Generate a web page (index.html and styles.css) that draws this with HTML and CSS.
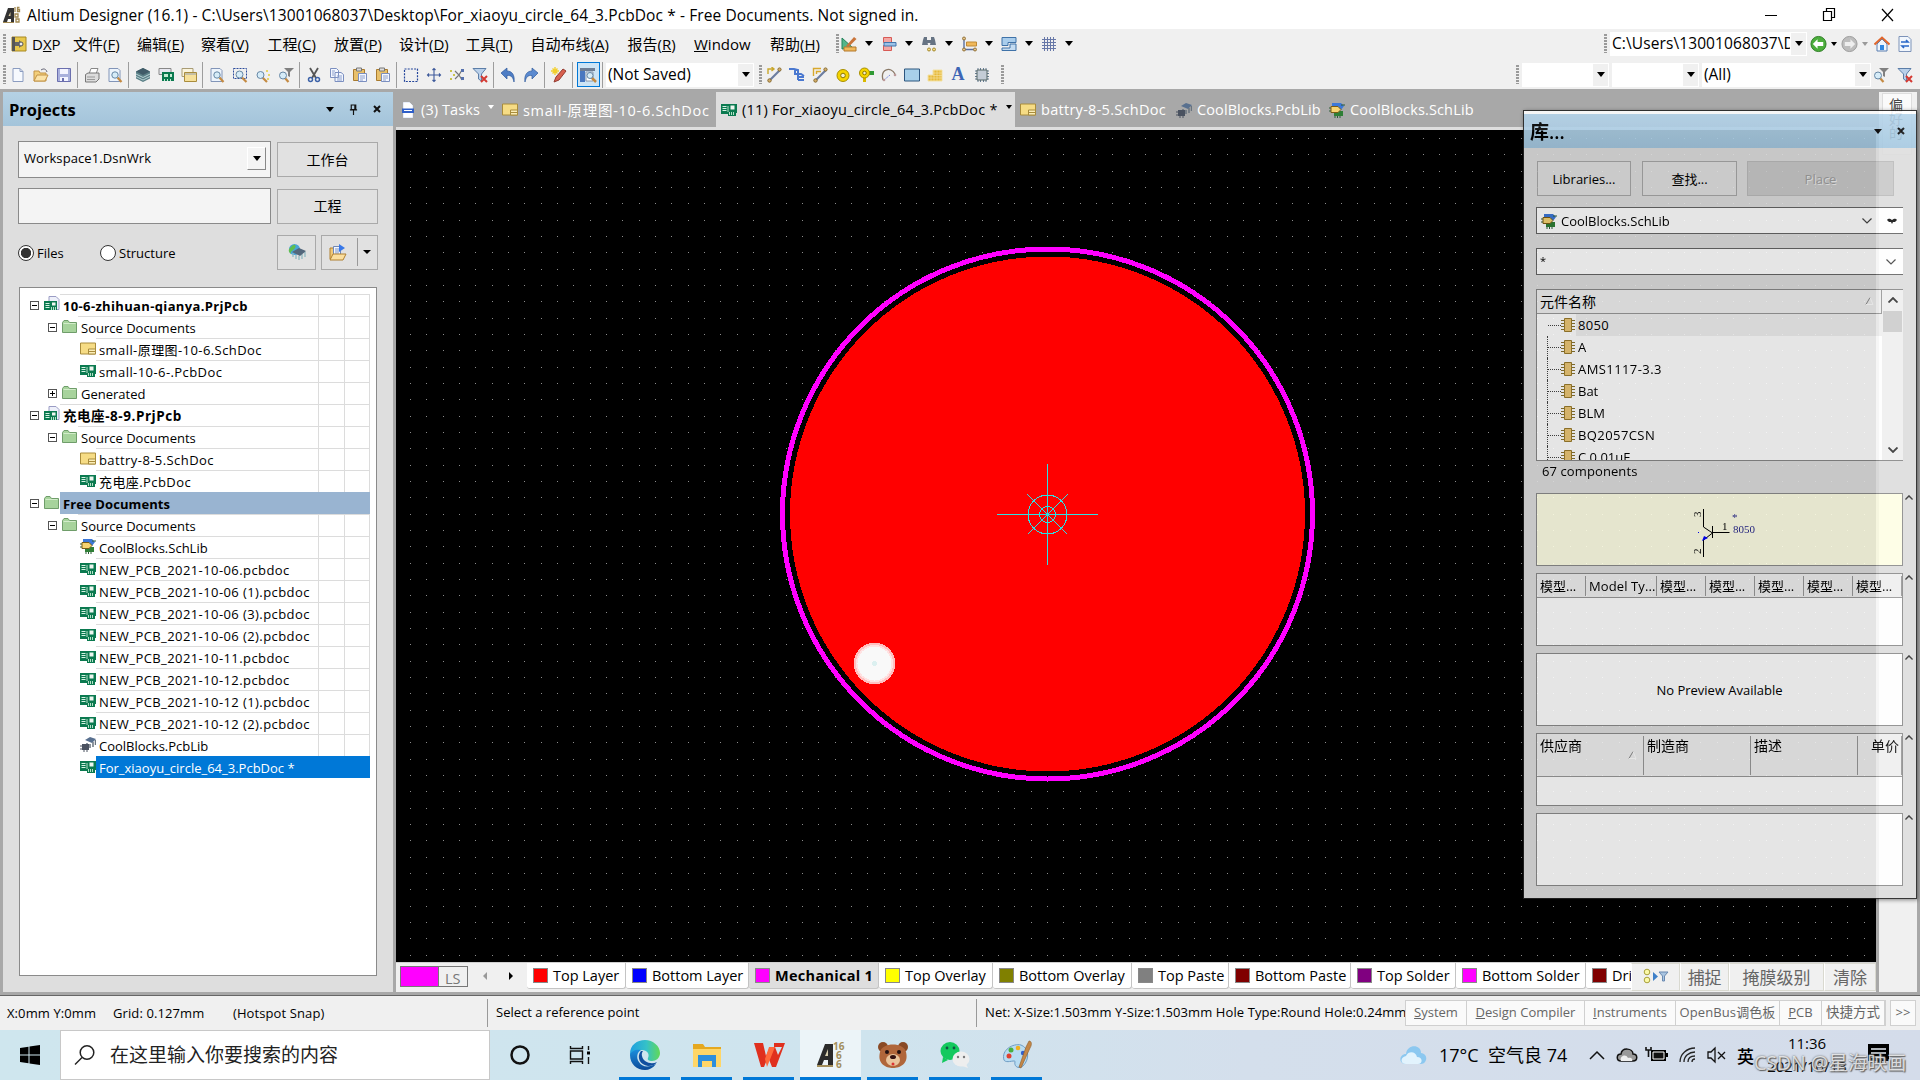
FILE: index.html
```html
<!DOCTYPE html>
<html lang="zh-CN">
<head>
    <meta charset="UTF-8">
    <title>Altium Designer (16.1)</title>
    <link rel="stylesheet" href="styles.css">
</head>
<body>
    <!-- icon sprite -->
    <svg class="sprite" width="0" height="0">
        <symbol id="i-altium" viewBox="0 0 18 18"><path d="M0 16 5 2h6v14H8v-3H5l-1 3z" fill="#333"/><path d="M7.500 6v4h-2z" fill="#d8c9a0"/><path d="M0 16h11v1H0z" fill="#a08850"/><path d="M12 1v5M16.500 1.500h-2v4h2v-2h-2M12 8h3v3h-3zM13 13h3v3h-3z" stroke="#a08850" stroke-width="1.300" fill="none"/></symbol>
        <symbol id="i-dxp" viewBox="0 0 16 16"><path d="M1 1h14v14H1z" fill="#e8c84c" stroke="#a88820"/><path d="M1 1h3v14H1z" fill="#555"/><path d="M4 6h4V4l4 4-4 4v-2H4z" fill="#666"/><circle cx="10" cy="8" r="2" fill="#eee" stroke="#555"/></symbol>
        <symbol id="i-new" viewBox="0 0 16 16"><path d="M3 1.500h7l3 3v10H3z" fill="#f6f9fe" stroke="#8b9cc0"/><path d="M10 1.500v3h3" fill="none" stroke="#8b9cc0"/></symbol>
        <symbol id="i-open" viewBox="0 0 16 16"><path d="M1 14V4h5l1 2h6v8z" fill="#f3cf7a" stroke="#c29347"/><path d="M1 14 4 8h11l-3 6z" fill="#fbe3a8" stroke="#c29347"/><path d="M8 3c3-2 5-1 6 2" fill="none" stroke="#667"/></symbol>
        <symbol id="i-save" viewBox="0 0 16 16"><path d="M1.500 1.500h13v13h-13z" fill="#a9b0dc" stroke="#6b6fae"/><path d="M4 2h8v5H4zM4 10h8v4H4z" fill="#f4f4ff"/><path d="M6 11h2v3H6z" fill="#6b6fae"/></symbol>
        <symbol id="i-print" viewBox="0 0 16 16"><path d="M5 7 7 1.500h7L12 7" fill="#fff" stroke="#888"/><path d="M1.500 7.500 4 6h11v6l-3 3H1.500z" fill="#dcdcdc" stroke="#777"/><path d="M3 10h8M3 12.500h8" stroke="#999"/></symbol>
        <symbol id="i-preview" viewBox="0 0 16 16"><path d="M2 1.500h9l2 2v11H2z" fill="#edf4fc" stroke="#8295b8"/><path d="M10.500 10.500 14.500 15" stroke="#c48a42" stroke-width="2.200"/><circle cx="8" cy="8" r="3.200" fill="#d6ecf8" stroke="#6687a5"/></symbol>
        <symbol id="i-layers" viewBox="0 0 16 16"><path d="m8 1 7 3.500v7L8 15l-7-3.500v-7z" fill="#5a7f86"/><path d="m8 1 7 3.500L8 8 1 4.500z" fill="#405b68"/><path d="m1 7 7 3.500L15 7M1 9.500 8 13l7-3.500" stroke="#b9d4d6" fill="none"/></symbol>
        <symbol id="i-pcb" viewBox="0 0 16 13"><path d="M0 1h16v9h-1v3H7v-2H0z" fill="#0b7a50"/><path d="M1.500 3.500h4M1.500 5.500h4M1.500 7.500h4" stroke="#d6f2e4"/><path d="M9.500 2.500h4v4h-4z" fill="#eef6f0"/><path d="M7 3v6M8.500 9v3M10.500 9v3M12.500 9v3" stroke="#b5e0c6"/></symbol>
        <symbol id="i-pcb2" viewBox="0 0 16 16"><path d="M1 1.500h12v6H1z" fill="#e8e8f0" stroke="#888"/><path d="M4 5h12v9H4z" fill="#0b7a50"/><path d="M6 7h4v3H6zM12 7h2v3h-2zM6 12h1v2H6zm3 0h1v2H9zm3 0h1v2h-1z" fill="#c5ecd4"/></symbol>
        <symbol id="i-sheets" viewBox="0 0 16 16"><path d="M1 1.500h11v8H1z" fill="#faf4dd" stroke="#a99c75"/><path d="M3.500 5.500h12v9h-12z" fill="#f6e09a" stroke="#a98c3c"/><path d="M4 6h11v2H4z" fill="#c5bfa5"/></symbol>
        <symbol id="i-zoomsel" viewBox="0 0 16 16"><path d="M1.500 1.500h13v10h-13z" fill="none" stroke="#2c4c9c" stroke-dasharray="2 1"/><path d="M10 10.500 14.500 15" stroke="#c48a42" stroke-width="2.200"/><circle cx="7.500" cy="7.500" r="3.500" fill="#d6ecf8" stroke="#6687a5"/></symbol>
        <symbol id="i-zoom" viewBox="0 0 16 16"><path d="M7 10 12 15" stroke="#c48a42" stroke-width="2.200"/><circle cx="5.500" cy="8" r="3.500" fill="#d6ecf8" stroke="#6687a5"/><path d="M11 3h2v2h-2zm2 4h2v2h-2zm-1 4h2v2h-2z" fill="#e6d66a"/></symbol>
        <symbol id="i-zoomf" viewBox="0 0 16 16"><path d="M6.500 10.500 10.500 15" stroke="#c48a42" stroke-width="2.200"/><circle cx="5" cy="8.500" r="3.500" fill="#d6ecf8" stroke="#6687a5"/><path d="M6 1h10l-4 4v5l-2-1V5z" fill="#808080"/></symbol>
        <symbol id="i-cut" viewBox="0 0 16 16"><path d="m4 1 6 10M12 1 6 11" stroke="#555" stroke-width="1.800"/><circle cx="4.500" cy="12.500" r="2" fill="none" stroke="#3c62a8" stroke-width="1.500"/><circle cx="11.500" cy="12.500" r="2" fill="none" stroke="#3c62a8" stroke-width="1.500"/></symbol>
        <symbol id="i-copy" viewBox="0 0 16 16"><path d="M1.500 1.500h6l2 2v7h-8zM6 5.500h6l2.500 2v7H6z" fill="#f2f6ff" stroke="#7b8fc0"/><path d="M8 9h5M8 11h5M8 13h5M3 4h3M3 6h2M3 8h2" stroke="#8da0cc"/></symbol>
        <symbol id="i-paste" viewBox="0 0 16 16"><path d="M1.500 2.500h11v11h-11z" fill="#e8c06a" stroke="#a97b2f"/><path d="M4.500 1h5v3h-5z" fill="#ddd" stroke="#777"/><path d="M6.500 6.500h8v8h-8z" fill="#f4f7ff" stroke="#7b8fc0"/><path d="M8 9h5M8 11h5M8 13h3" stroke="#8da0cc"/></symbol>
        <symbol id="i-select" viewBox="0 0 16 16"><path d="M1.500 2h13v12.500h-13z" fill="none" stroke="#22449a" stroke-width="1.200" stroke-dasharray="2 1.200"/></symbol>
        <symbol id="i-move" viewBox="0 0 16 16"><path d="M8 1.500v13M1.500 8h13M6.500 3 8 1.500 9.500 3M6.500 13 8 14.500 9.500 13M3 6.500 1.500 8 3 9.500M13 6.500 14.500 8 13 9.500" fill="none" stroke="#3e5a9b" stroke-width="1.100"/></symbol>
        <symbol id="i-desel" viewBox="0 0 16 16"><path d="m6 4 4 4-4 4M13 3l-3 5 3 5" fill="none" stroke="#777" stroke-width="1.200"/><path d="M1 3h2v2H1zm0 8h2v2H1zm3-4h2v2H4z" fill="#c9c34a"/><path d="M12 2h3v3h-3zm0 8h3v3h-3z" fill="#5571ad"/></symbol>
        <symbol id="i-clrf" viewBox="0 0 16 16"><path d="M1 1.500h13L9.500 7v7l-3-2V7z" fill="#b9d0ea" stroke="#5c7ea8"/><path d="m9 9 6 6m0-6-6 6" stroke="#d43a33" stroke-width="2"/></symbol>
        <symbol id="i-undo" viewBox="0 0 16 16"><path d="M1 6 7 1v3c5 0 8 4 7 11-1-5-3-7-7-6.500V12z" fill="#4e7dc4" stroke="#2f5a9c" stroke-width=".7"/></symbol>
        <symbol id="i-redo" viewBox="0 0 16 16"><path d="M15 6 9 1v3C4 4 1 8 2 15c1-5 3-7 7-6.500V12z" fill="#5b8ad0" stroke="#2f5a9c" stroke-width=".7"/></symbol>
        <symbol id="i-pen" viewBox="0 0 16 16"><path d="m3 15 2-5 7-8 3 2-7 9z" fill="#d9604f" stroke="#943b30"/><path d="M4 0v8M0 4h8M1.500 1.500l5 5M6.500 1.500l-5 5" stroke="#f2cf2c" stroke-width="1.400"/></symbol>
        <symbol id="i-browse" viewBox="0 0 18 16"><path d="M1 1h15v3H1z" fill="#6d7d94"/><path d="M1 4h5v11H1z" fill="#4a78c0"/><path d="M7 5h7v9H7z" fill="#fff" stroke="#8a97ab"/><path d="m12 10 5 5" stroke="#c48a42" stroke-width="2.500"/><circle cx="11" cy="8.500" r="3" fill="#d6ecf8" stroke="#6687a5"/></symbol>
        <symbol id="i-route" viewBox="0 0 16 16"><path d="M2 7V2h5M5.500 0 8 2 5.500 4" fill="none" stroke="#c9a72c" stroke-width="1.400"/><path d="M4 13 14 3" stroke="#6b7da0" stroke-width="2.200"/><circle cx="3.500" cy="13.500" r="1.700" fill="#d5b06c" stroke="#876a2f"/><circle cx="13.500" cy="2.500" r="1.600" fill="#d5b06c" stroke="#876a2f"/></symbol>
        <symbol id="i-diff" viewBox="0 0 16 16"><path d="M0 2h5l4 1v10M6 2v5h6l3 2M9 10h6M9 13h6" fill="none" stroke="#4a78d0" stroke-width="2"/></symbol>
        <symbol id="i-multi" viewBox="0 0 16 16"><path d="M1.500 9V1.500H9M4.500 7V4.500H9" fill="none" stroke="#d8a82c" stroke-width="1.400"/><path d="M4 13 14 3" stroke="#6b7da0" stroke-width="2.200"/><circle cx="3.500" cy="13.500" r="1.700" fill="#d5b06c" stroke="#876a2f"/><circle cx="13.500" cy="2.500" r="1.600" fill="#d5b06c" stroke="#876a2f"/></symbol>
        <symbol id="i-pad" viewBox="0 0 16 16"><circle cx="8" cy="8.500" r="6" fill="#f5d400" stroke="#a88f00"/><circle cx="8" cy="8.500" r="2.300" fill="#f4f0d0" stroke="#8c7700"/></symbol>
        <symbol id="i-via" viewBox="0 0 16 16"><path d="M5 10h3v5H5z" fill="#d9b800"/><path d="M10 4h6v4h-6z" fill="#2f9a34"/><circle cx="6.500" cy="6" r="5" fill="#f5d400" stroke="#a88f00"/><circle cx="6.500" cy="6" r="1.800" fill="#f4f0d0" stroke="#8c7700"/></symbol>
        <symbol id="i-arc" viewBox="0 0 16 16"><path d="M2 13C-1 2 10-1 14 7" fill="none" stroke="#8a7a68" stroke-width="1.300"/><path d="m3 13 6-5" stroke="#7b8ce0" stroke-dasharray="2 1"/><circle cx="3" cy="13" r="1.300" fill="#b99"/><circle cx="14" cy="8" r="1.300" fill="#b99"/></symbol>
        <symbol id="i-fill" viewBox="0 0 16 16"><path d="M.5 2h15v12H.5z" fill="#a8d0ea" stroke="#2d567f"/></symbol>
        <symbol id="i-poly" viewBox="0 0 16 16"><path d="M1 14V8h5V3h9v11z" fill="#e6b93a" stroke="#f3e2a6"/><path d="M1 11h14M4 8v6M7 3v11M10 3v11M13 3v11M6 6h9M6 8.500h9" stroke="#f6e3a4" stroke-width=".6"/></symbol>
        <symbol id="i-chip" viewBox="0 0 16 16"><path d="M1 4h14M1 6.500h14M1 9.500h14M1 12h14M4 1v14M6.500 1v14M9.500 1v14M12 1v14" stroke="#667c93"/><path d="M3 3h10v10H3z" fill="#c3ccd6" stroke="#566"/></symbol>
        <symbol id="i-draft" viewBox="0 0 16 16"><path d="M1 2v11l11-1z" fill="#53b58a" stroke="#23835a"/><path d="M3 11h12v4H3z" fill="#f0b85a" stroke="#b3792a"/><path d="m5 10 8-9 2.500 2-8 8z" fill="#c9743a"/></symbol>
        <symbol id="i-align" viewBox="0 0 16 16"><path d="M2.500 1.500h8v5h-8zM2.500 9.500h8v5h-8z" fill="#f3a7a4" stroke="#d85a55"/><path d="M3 6.500h12v3.500H3z" fill="#9cc2e8" stroke="#4376ad"/></symbol>
        <symbol id="i-find" viewBox="0 0 16 16"><path d="M3 1h3v3l1 5H1l1-5zM10 1h3l1 3 1 5H9l1-5zM6 4h4v3H6z" fill="#667383"/><circle cx="8" cy="13.500" r="1.500" fill="#f4dc8c" stroke="#a58a2c"/><circle cx="13" cy="13.500" r="1.500" fill="#f4dc8c" stroke="#a58a2c"/></symbol>
        <symbol id="i-dim" viewBox="0 0 16 16"><path d="M3 2v11.500h11" fill="none" stroke="#5b6f9f" stroke-width="1.400"/><path d="M5.500 6h10v4h-10z" fill="#f0b85a" stroke="#c08a35"/><circle cx="3" cy="2.500" r="1.500" fill="#e5c58a" stroke="#94733a"/><circle cx="3" cy="13.500" r="1.500" fill="#e5c58a" stroke="#94733a"/><circle cx="14" cy="13.500" r="1.500" fill="#e5c58a" stroke="#94733a"/></symbol>
        <symbol id="i-room" viewBox="0 0 16 16"><path d="M1 1.500h14v5H7v3H1z" fill="#a9cdec" stroke="#3f72a8"/><path d="M9 8h6v6.500H1V12h8z" fill="#c4dcf2" stroke="#3f72a8"/></symbol>
        <symbol id="i-grid" viewBox="0 0 16 16"><path d="M1 3.500h14M1 6.500h14M1 9.500h14M1 12.500h14M3.500 1v14M6.500 1v14M9.500 1v14M12.500 1v14" stroke="#6878a8"/></symbol>
        <symbol id="i-back" viewBox="0 0 18 18"><circle cx="9" cy="9" r="8" fill="#4cae3c" stroke="#2a7a22"/><path d="m8 4-5 5 5 5v-3h6V7H8z" fill="#fff"/></symbol>
        <symbol id="i-fwd" viewBox="0 0 18 18"><circle cx="9" cy="9" r="8" fill="#bdbdbd" stroke="#999"/><path d="m10 4 5 5-5 5v-3H4V7h6z" fill="#eee"/></symbol>
        <symbol id="i-home" viewBox="0 0 16 16"><path d="M3 8v7h10V8L8 3z" fill="#eef4fb" stroke="#5a7fb0"/><path d="M.5 8.500 8 1.500l7.500 7" fill="none" stroke="#e0662c" stroke-width="2"/><path d="M6 9h4v5H6z" fill="#2f86e0"/></symbol>
        <symbol id="i-sync" viewBox="0 0 16 16"><path d="M2 .5h9l3 3v12H2z" fill="#f2f7fd" stroke="#7d93b8"/><path d="M4 6h7L9 4M12 10H5l2 2" fill="none" stroke="#2a68c8" stroke-width="1.600"/></symbol>
        <symbol id="i-sch" viewBox="0 0 16 13"><path d="M.5 1h15v11H.5z" fill="#f6dc85" stroke="#a98c3c"/><path d="M8.500 7h7v5h-7zM9 9.500h6" fill="#fbeeb8" stroke="#a98c3c"/></symbol>
        <symbol id="i-tasks" viewBox="0 0 16 16"><path d="M3.500.5h6l3 3v12h-9z" fill="#fff" stroke="#e8eefa"/><path d="M2 6.500h12v4.500H2z" fill="#2f5fc8"/><path d="M4 8.500h8" stroke="#fff"/></symbol>
        <symbol id="i-schlib" viewBox="0 0 16 16"><path d="M3 1h9l3 3-3 4H3z" fill="#3c78d8"/><path d="M5 9h9v5H5z" fill="#2f7f36"/><path d="M6 14v2M8.500 14v2M11 14v2M0 6h3M0 9h3M12 3h4" stroke="#2d5c38"/><path d="M2 4.500h7l3 3-3 3H2z" fill="#f7d472" stroke="#7a5c14"/></symbol>
        <symbol id="i-pcblib" viewBox="0 0 16 16"><path d="m5 4 5-3 6 2-4 4z" fill="#58708f"/><path d="M7 7v4M10 8v4M13 6v5M15.500 4v5" stroke="#68737e" stroke-width="1.500"/><path d="M2 8h7v6H2z" fill="#4a5260"/><path d="M0 10h2M0 13h2M4 14v2M7 14v2" stroke="#4a5260"/></symbol>
        <symbol id="i-prj" viewBox="0 0 16 16"><path d="M5 .5h7l3 3v10H5z" fill="#eef0fa" stroke="#9a9cc4"/><path d="M0 5h13v9H0z" fill="#0b7a50"/><path d="M1.500 7.500h4M1.500 9.500h4M1.500 11.500h4" stroke="#d6f2e4"/><path d="M8 6.500h3.500v3H8z" fill="#eef6f0"/><path d="M7.500 11v3M9.500 11v3M11.500 11v3" stroke="#b5e0c6"/></symbol>
        <symbol id="i-folder" viewBox="0 0 15 13"><path d="M.5 12.500v-10L2 .5h4l1.500 2h7v10z" fill="#a7d39c" stroke="#6f9d6a"/><path d="M1.500 3.500h12" stroke="#d2ecca"/></symbol>
        <symbol id="i-part" viewBox="0 0 14 14"><path d="M0 2.500h14M0 5.500h14M0 8.500h14M0 11.500h14" stroke="#8a7430"/><path d="M3.500.5h7v13h-7z" fill="#ecc877" stroke="#9b7c2d"/></symbol>
        <symbol id="i-globe" viewBox="0 0 18 18"><circle cx="6.500" cy="6.500" r="5.500" fill="#49a4d8"/><path d="M3 4c3-4 6-2 4 1s-5 3-4 6c-3-2-3-5 0-7z" fill="#5fbf4f"/><path d="M5 10v4M8 12v4M11 13v4M14 11v5M17 9v5" stroke="#8fb8c0" stroke-width="1.300"/><path d="m4 9 7-4 7 3-6 5z" fill="#53677c"/></symbol>
        <symbol id="i-openprj" viewBox="0 0 18 18"><path d="M1 16V5h4v8z" fill="#f0c878" stroke="#b08030"/><path d="M4.500 3.500h7v10h-7z" fill="#f4f8ff" stroke="#6f88b8"/><path d="M6 6h4M6 8h4M6 10h4" stroke="#7c94c4"/><path d="M10 1v8l6-4z" fill="#3878e8"/><path d="m1 17 3-6h13l-3 6z" fill="#fbdf9f" stroke="#b08030"/></symbol>
        <symbol id="i-mask" viewBox="0 0 26 16"><circle cx="4" cy="4" r="2.800" fill="#fbf9a8" stroke="#a9a13c"/><circle cx="4" cy="12" r="2.800" fill="#fbf9a8" stroke="#a9a13c"/><path d="M10 4v9l5-4.500z" fill="#3f80c8"/><path d="M16 4h9l-3.500 4v5h-2V8z" fill="#a8c4e0" stroke="#6888b0"/></symbol>
        <symbol id="i-pin" viewBox="0 0 10 12"><path d="M2.500 1h5v5h-5zM1 6.500h8M5 6v6M6.500 1v5" fill="none" stroke="#111" stroke-width="1.300"/></symbol>
        <symbol id="i-x" viewBox="0 0 8 8"><path d="m1 1 6 6m0-6L1 7" stroke="#111" stroke-width="2"/></symbol>
        <symbol id="i-chev" viewBox="0 0 10 6"><path d="m.5.500 4.500 4.500L9.500.5" fill="none" stroke="#444" stroke-width="1.200"/></symbol>
        <symbol id="i-up" viewBox="0 0 10 6"><path d="M.5 5.500 5 1l4.500 4.500" fill="none" stroke="#333" stroke-width="1.800"/></symbol>
    </svg>

    <div class="titlebar">
        <svg class="app-icon"><use href="#i-altium"/></svg>
        <span class="title-text">Altium Designer (16.1) - C:\Users\13001068037\Desktop\For_xiaoyu_circle_64_3.PcbDoc * - Free Documents. Not signed in.</span>
        <svg class="win-btns" width="140" height="16"><path d="M5 8.500h12" stroke="#000"/><path d="M63.500 4.500h8v9h-8zM66.500 4.500v-3h8v9h-3" fill="none" stroke="#000" stroke-width="1.200"/><path d="m122 2 11 12m0-12-11 12" stroke="#000" stroke-width="1.200"/></svg>
    </div>

    <div class="menubar">
        <i class="grip"></i>
        <svg class="icon dxp"><use href="#i-dxp"/></svg>
        <span class="menu m-dxp">D<u>X</u>P</span>
        <span class="menu m1">文件(<u>F</u>)</span>
        <span class="menu m2">编辑(<u>E</u>)</span>
        <span class="menu m3">察看(<u>V</u>)</span>
        <span class="menu m3">工程(<u>C</u>)</span>
        <span class="menu m4">放置(<u>P</u>)</span>
        <span class="menu m3">设计(<u>D</u>)</span>
        <span class="menu m4">工具(<u>T</u>)</span>
        <span class="menu m5">自动布线(<u>A</u>)</span>
        <span class="menu m3">报告(<u>R</u>)</span>
        <span class="menu m6"><u>W</u>indow</span>
        <span class="menu m7">帮助(<u>H</u>)</span>
        <i class="grip"></i>
        <div class="drops">
            <span><svg class="icon"><use href="#i-draft"/></svg><i class="tri"></i></span>
            <span><svg class="icon"><use href="#i-align"/></svg><i class="tri"></i></span>
            <span><svg class="icon"><use href="#i-find"/></svg><i class="tri"></i></span>
            <span><svg class="icon"><use href="#i-dim"/></svg><i class="tri"></i></span>
            <span><svg class="icon"><use href="#i-room"/></svg><i class="tri"></i></span>
            <span><svg class="icon"><use href="#i-grid"/></svg><i class="tri"></i></span>
        </div>
        <div class="bar-right">
            <i class="grip"></i>
            <div class="combo address"><span>C:\Users\13001068037\Desktop</span><b><i class="tri"></i></b></div>
            <svg class="icon nav"><use href="#i-back"/></svg><i class="tri small"></i>
            <svg class="icon nav"><use href="#i-fwd"/></svg><i class="tri small grey"></i>
            <svg class="icon home"><use href="#i-home"/></svg>
            <svg class="icon"><use href="#i-sync"/></svg>
        </div>
    </div>

    <div class="toolbar">
        <i class="grip"></i>
        <div class="tools">
            <svg><use href="#i-new"/></svg><svg><use href="#i-open"/></svg><svg><use href="#i-save"/></svg><i class="sep"></i>
            <svg><use href="#i-print"/></svg><svg><use href="#i-preview"/></svg><i class="sep"></i>
            <svg><use href="#i-layers"/></svg><svg><use href="#i-pcb2"/></svg><svg><use href="#i-sheets"/></svg><i class="sep"></i>
            <svg><use href="#i-preview"/></svg><svg><use href="#i-zoomsel"/></svg><svg><use href="#i-zoom"/></svg><svg><use href="#i-zoomf"/></svg><i class="sep"></i>
            <svg><use href="#i-cut"/></svg><svg><use href="#i-copy"/></svg><svg><use href="#i-paste"/></svg><svg><use href="#i-paste"/></svg><i class="sep"></i>
            <svg><use href="#i-select"/></svg><svg><use href="#i-move"/></svg><svg><use href="#i-desel"/></svg><svg><use href="#i-clrf"/></svg><i class="sep"></i>
            <svg><use href="#i-undo"/></svg><svg><use href="#i-redo"/></svg><i class="sep"></i>
            <svg><use href="#i-pen"/></svg><i class="sep"></i>
            <span class="tool-on"><svg><use href="#i-browse"/></svg></span><i class="sep"></i>
        </div>
        <div class="combo saved"><span>(Not Saved)</span><b><i class="tri"></i></b></div>
        <i class="grip g2"></i>
        <div class="tools place">
            <svg><use href="#i-route"/></svg><svg><use href="#i-diff"/></svg><svg><use href="#i-multi"/></svg><svg><use href="#i-pad"/></svg><svg><use href="#i-via"/></svg><svg><use href="#i-arc"/></svg><svg><use href="#i-fill"/></svg><svg><use href="#i-poly"/></svg><span class="letter-a">A</span><svg><use href="#i-chip"/></svg>
        </div>
        <i class="grip"></i>
        <div class="bar-right">
            <i class="grip"></i>
            <div class="combo f1"><span></span><b><i class="tri"></i></b></div>
            <div class="combo f1"><span></span><b><i class="tri"></i></b></div>
            <div class="combo f2"><span>(All)</span><b><i class="tri"></i></b></div>
            <svg class="icon zf"><use href="#i-zoomf"/></svg>
            <svg class="icon"><use href="#i-clrf"/></svg>
        </div>
    </div>

    <div class="workspace">
        <div class="panel">
            <div class="panel-head">
                <span>Projects</span>
                <div class="head-icons"><i class="tri"></i><svg class="pin"><use href="#i-pin"/></svg><svg class="close"><use href="#i-x"/></svg></div>
            </div>
            <div class="panel-body">
                <div class="form-row">
                    <div class="select">Workspace1.DsnWrk<b><i class="tri"></i></b></div>
                    <div class="button">工作台</div>
                </div>
                <div class="form-row second">
                    <div class="select"></div>
                    <div class="button">工程</div>
                </div>
                <div class="form-row radios">
                    <i class="radio on"></i><span class="r-files">Files</span>
                    <i class="radio"></i><span class="r-struct">Structure</span>
                    <div class="button sq"><svg><use href="#i-globe"/></svg></div>
                    <div class="button split"><svg><use href="#i-openprj"/></svg><i class="bar"></i><i class="tri small"></i></div>
                </div>
                <div class="tree">
                    <div class="node l0"><i class="exp"></i><svg class="prj"><use href="#i-prj"/></svg><div class="cell"><b>10-6-zhihuan-qianya.PrjPcb</b></div></div>
                    <div class="node l1"><i class="exp"></i><svg class="fold"><use href="#i-folder"/></svg><div class="cell">Source Documents</div></div>
                    <div class="node l2"><svg><use href="#i-sch"/></svg><div class="cell wide">small-原理图-10-6.SchDoc</div></div>
                    <div class="node l2"><svg><use href="#i-pcb"/></svg><div class="cell wide">small-10-6-.PcbDoc</div></div>
                    <div class="node l1"><i class="exp plus"></i><svg class="fold"><use href="#i-folder"/></svg><div class="cell">Generated</div></div>
                    <div class="node l0"><i class="exp"></i><svg class="prj"><use href="#i-prj"/></svg><div class="cell"><b class="cjk">充电座-8-9.PrjPcb</b></div></div>
                    <div class="node l1"><i class="exp"></i><svg class="fold"><use href="#i-folder"/></svg><div class="cell">Source Documents</div></div>
                    <div class="node l2"><svg><use href="#i-sch"/></svg><div class="cell wide">battry-8-5.SchDoc</div></div>
                    <div class="node l2"><svg><use href="#i-pcb"/></svg><div class="cell wide">充电座.PcbDoc</div></div>
                    <div class="node l0 group"><i class="exp"></i><svg class="fold"><use href="#i-folder"/></svg><div class="cell"><b class="plain">Free Documents</b></div></div>
                    <div class="node l1"><i class="exp"></i><svg class="fold"><use href="#i-folder"/></svg><div class="cell">Source Documents</div></div>
                    <div class="node l2"><svg class="lib"><use href="#i-schlib"/></svg><div class="cell">CoolBlocks.SchLib</div></div>
                    <div class="node l2"><svg><use href="#i-pcb"/></svg><div class="cell wide">NEW_PCB_2021-10-06.pcbdoc</div></div>
                    <div class="node l2"><svg><use href="#i-pcb"/></svg><div class="cell wide">NEW_PCB_2021-10-06 (1).pcbdoc</div></div>
                    <div class="node l2"><svg><use href="#i-pcb"/></svg><div class="cell wide">NEW_PCB_2021-10-06 (3).pcbdoc</div></div>
                    <div class="node l2"><svg><use href="#i-pcb"/></svg><div class="cell wide">NEW_PCB_2021-10-06 (2).pcbdoc</div></div>
                    <div class="node l2"><svg><use href="#i-pcb"/></svg><div class="cell wide">NEW_PCB_2021-10-11.pcbdoc</div></div>
                    <div class="node l2"><svg><use href="#i-pcb"/></svg><div class="cell wide">NEW_PCB_2021-10-12.pcbdoc</div></div>
                    <div class="node l2"><svg><use href="#i-pcb"/></svg><div class="cell wide">NEW_PCB_2021-10-12 (1).pcbdoc</div></div>
                    <div class="node l2"><svg><use href="#i-pcb"/></svg><div class="cell wide">NEW_PCB_2021-10-12 (2).pcbdoc</div></div>
                    <div class="node l2"><svg class="lib"><use href="#i-pcblib"/></svg><div class="cell">CoolBlocks.PcbLib</div></div>
                    <div class="node l2 selected"><svg><use href="#i-pcb"/></svg><div class="cell">For_xiaoyu_circle_64_3.PcbDoc *</div></div>
                </div>
            </div>
        </div>

        <div class="editor">
            <div class="tabs">
                <div class="tab t1"><svg class="sq"><use href="#i-tasks"/></svg><span>(3) Tasks</span><i class="tri small"></i></div>
                <div class="tab t2"><svg><use href="#i-sch"/></svg><span>small-原理图-10-6.SchDoc</span></div>
                <div class="tab t3 active"><svg><use href="#i-pcb"/></svg><span>(11) For_xiaoyu_circle_64_3.PcbDoc *</span><i class="tri small"></i></div>
                <div class="tab t4"><svg><use href="#i-sch"/></svg><span>battry-8-5.SchDoc</span></div>
                <div class="tab t5"><svg class="sq"><use href="#i-pcblib"/></svg><span>CoolBlocks.PcbLib</span></div>
                <div class="tab t6"><svg class="sq"><use href="#i-schlib"/></svg><span>CoolBlocks.SchLib</span></div>
            </div>
            <svg class="board" width="1480" height="832" viewBox="396 130 1480 832">
                <defs>
                    <pattern id="dots" x="410" y="122" width="49" height="49" patternUnits="userSpaceOnUse">
                        <path d="M0 0h1v1H0zM16 0h1v1h-1zM33 0h1v1h-1zM0 16h1v1H0zM16 16h1v1h-1zM33 16h1v1h-1zM0 32h1v1H0zM16 32h1v1h-1zM33 32h1v1h-1z" fill="#8c8c8c"/>
                    </pattern>
                </defs>
                <rect x="396" y="130" width="1480" height="832" fill="#000"/>
                <rect x="396" y="130" width="1480" height="832" fill="url(#dots)"/>
                <circle cx="1047.500" cy="514" r="265" fill="#000" stroke="#f0f" stroke-width="5" shape-rendering="crispEdges"/>
                <circle cx="1047.500" cy="514" r="257.500" fill="#f00" shape-rendering="crispEdges"/>
                <g fill="none" stroke="#2ee0e4" shape-rendering="crispEdges">
                    <path d="M997 514.500h101M1047.500 464v101M1027.500 494.500l40 40M1067.500 494.500l-40 40"/>
                    <circle cx="1047.500" cy="514.500" r="19.500"/>
                    <circle cx="1047.500" cy="514.500" r="8"/>
                </g>
                <circle cx="874.500" cy="663.500" r="20.800" fill="#ffc0c0" shape-rendering="crispEdges"/>
                <circle cx="874.500" cy="663.500" r="18.600" fill="#ffe2e2" shape-rendering="crispEdges"/>
                <circle cx="874.500" cy="663.500" r="17" fill="#f9f9f9" shape-rendering="crispEdges"/>
                <circle cx="874.500" cy="663.500" r="2.600" fill="#dcf0f0" shape-rendering="crispEdges"/>
            </svg>
            <div class="layerbar">
                <div class="ls"><i></i><span>LS</span></div>
                <i class="arrow left"></i><i class="arrow right"></i>
                <div class="layers">
                    <div class="layer w1"><i class="red"></i><span>Top Layer</span></div>
                    <div class="layer w2"><i class="blue"></i><span>Bottom Layer</span></div>
                    <div class="layer w3 current"><i class="magenta"></i><span>Mechanical 1</span></div>
                    <div class="layer w4"><i class="yellow"></i><span>Top Overlay</span></div>
                    <div class="layer w5"><i class="olive"></i><span>Bottom Overlay</span></div>
                    <div class="layer w6"><i class="gray"></i><span>Top Paste</span></div>
                    <div class="layer w7"><i class="maroon"></i><span>Bottom Paste</span></div>
                    <div class="layer w8"><i class="purple"></i><span>Top Solder</span></div>
                    <div class="layer w9"><i class="magenta"></i><span>Bottom Solder</span></div>
                    <div class="layer w10"><i class="maroon"></i><span>Drill Guide</span></div>
                </div>
                <div class="lbtn b0"><svg><use href="#i-mask"/></svg></div>
                <div class="lbtn b1">捕捉</div>
                <div class="lbtn b2">掩膜级别</div>
                <div class="lbtn b3">清除</div>
            </div>
        </div>
        <div class="sidestrip"><div class="sidetab">偏好的</div></div>
    </div>

    <div class="statusbar">
        <span class="s1">X:0mm Y:0mm</span><span class="s2">Grid: 0.127mm</span><span class="s3">(Hotspot Snap)</span>
        <span class="s4">Select a reference point</span>
        <span class="s5">Net: X-Size:1.503mm Y-Size:1.503mm Hole Type:Round Hole:0.24mm</span>
        <div class="sysbtns">
            <span class="y1"><u>S</u>ystem</span><span class="y2"><u>D</u>esign Compiler</span><span class="y3"><u>I</u>nstruments</span><span class="y4">OpenBus调色板</span><span class="y5"><u>P</u>CB</span><span class="y6">快捷方式</span>
        </div>
        <span class="more">&gt;&gt;</span>
    </div>

    <div class="taskbar">
        <div class="start"><svg width="20" height="20"><path d="M0 3 8.500 1.800v7.700H0zM9.500 1.600 20 0v9.500H9.500zM0 10.500h8.500v7.700L0 17zM9.500 10.500H20V20L9.500 18.400z"/></svg></div>
        <div class="search"><svg width="22" height="22"><circle cx="13" cy="8.500" r="6.800" fill="none" stroke="#222" stroke-width="1.500"/><path d="M8 13.500 1 20.500" stroke="#222" stroke-width="1.500"/></svg><span>在这里输入你要搜索的内容</span></div>
        <div class="apps">
            <span class="app a0"><svg width="22" height="22"><circle cx="11" cy="11" r="8.500" fill="none" stroke="#111" stroke-width="2.500"/></svg></span>
            <span class="app a0"><svg width="22" height="22"><path d="M1.500 2v2.500h12V2M1.500 20v-2.500h12V20M1.500 7h12v8h-12zM19.500 2v4M19.500 13v7" fill="none" stroke="#111" stroke-width="1.400"/><path d="M18 7.500h3v3h-3z"/></svg></span>
            <span class="app run"><svg width="32" height="32"><defs><linearGradient id="eg" x1="0" x2="1"><stop offset="0" stop-color="#1f9fe0"/><stop offset=".55" stop-color="#35c1c8"/><stop offset="1" stop-color="#62d957"/></linearGradient><linearGradient id="eb" x1="0" y1="0" x2="0" y2="1"><stop offset="0" stop-color="#1b8ddc"/><stop offset="1" stop-color="#0c4a98"/></linearGradient></defs><path d="M1 15C1 6 8 1 16 1s15 6 15 13c0 5-4 8-8 8-3 0-5-1-4-3 2-4-1-8-6-8C7 11 2 14 1 17z" fill="url(#eg)"/><path d="M1 16c1-4 6-6 11-5-4 2-5 8-2 12 3 5 9 6 17 2-3 4-7 6-11 6C8 31 1 25 1 16z" fill="url(#eb)"/><path d="M12 12c-5 6-1 14 7 15 4 0 7-1 9-4-6 3-14 0-15-6-.5-2 0-4 1-5z" fill="#114f9f"/></svg></span>
            <span class="app run"><svg width="30" height="26"><path d="M1 2h10l2 3h16v20H1z" fill="#e5a820"/><path d="M1 7h28v18H1z" fill="#ffd667"/><path d="M6 25V13h18v12h-4v-6h-10v6z" fill="#2e8fdc"/></svg></span>
            <span class="app run"><svg width="32" height="26"><path d="M1 1h9l3 13 4-9h5l3 8 4-8h-8V1h11l-9 24h-4l-4-10-4 10H8z" fill="#e0301e"/><path d="M12 17 16 5h6l-6 15-2 5z" fill="#ff6a3c"/></svg></span>
            <span class="app run cur"><svg width="30" height="28"><path d="M1 24 9 3h8v21h-5v-5H8l-2 5z" fill="#2b2b2b"/><path d="M12 8v7H9z" fill="#d8d0b0"/><path d="M1 24h16v2H1z" fill="#a38f5c"/><text x="17" y="9" class="mini">16</text><text x="20" y="18" class="mini">6</text><text x="20" y="27" class="mini">6</text></svg></span>
            <span class="app run"><svg width="32" height="28"><circle cx="6" cy="6" r="5" fill="#8a4a25"/><circle cx="26" cy="6" r="5" fill="#8a4a25"/><path d="M3 11C5 1 27 1 29 11c3 12-6 16-13 16S0 23 3 11z" fill="#b0663a"/><ellipse cx="16" cy="19" rx="7" ry="6" fill="#e9c49c"/><ellipse cx="16" cy="16" rx="3" ry="2" fill="#311"/><circle cx="10" cy="11" r="2" fill="#211"/><circle cx="22" cy="11" r="2" fill="#211"/><circle cx="16" cy="23" r="1.500" fill="#d33"/></svg></span>
            <span class="app run"><svg width="32" height="28"><ellipse cx="11" cy="10" rx="9.500" ry="9" fill="#14c95e"/><path d="m4 16-1 6 6-3z" fill="#14c95e"/><circle cx="8" cy="7" r="1.400" fill="#154"/><circle cx="15" cy="7" r="1.400" fill="#154"/><ellipse cx="22" cy="18" rx="8.500" ry="7.500" fill="#eee"/><path d="m27 23 2 4-6-2z" fill="#eee"/><circle cx="19" cy="16" r="1.200" fill="#777"/><circle cx="25" cy="16" r="1.200" fill="#777"/></svg></span>
            <span class="app run"><svg width="32" height="30"><path d="M3 20C0 10 12 3 20 5c8 3 9 14 2 21-6 4-9-1-8-4s-9 2-11-2z" fill="#b8dcf2" stroke="#6d9cc4"/><circle cx="8" cy="16" r="2.500" fill="#e04030"/><circle cx="10" cy="10" r="2.500" fill="#48b040"/><circle cx="17" cy="8" r="2.300" fill="#f0b020"/><circle cx="22" cy="13" r="2.200" fill="#3060d0"/><path d="M28 1c3 0 3 4 1 7L20 28l-2-1 7-20z" fill="#c48748" stroke="#8a5a28" stroke-width=".6"/></svg></span>
        </div>
        <div class="tray">
            <svg class="weather" width="28" height="20"><path d="M7 19C-1 19 0 9 7 9 8-1 22-1 22 8c8 1 6 11 0 11z" fill="#8cc8f0"/><path d="M7 19C1 19 1 12 7 11c3-6 10-4 11 1 6 0 6 7 1 7z" fill="#e2f3fd"/></svg>
            <span class="temp">17°C&nbsp; 空气良 74</span>
            <svg width="226" height="20" class="tray-icons">
                <path d="m3 14 7-7 7 7" fill="none" stroke="#111" stroke-width="1.500"/>
                <path d="M34 16c-5 0-5-7 0-7 1-7 12-6 12 0 5 0 5 7 0 7z" fill="#999" stroke="#111" stroke-width="1.500"/><path d="M34 16c-2-5 5-8 7-3 4-1 5 2 4 3z" fill="#eee"/>
                <path d="M64 5h15v11H64zM79 8h2v4h-2z"/><path d="M66 7h11v7H66z" fill="#111" stroke="#fff"/><path d="M59 2v3h5V2M61.500 5v7" stroke="#111" stroke-width="1.600" fill="none"/>
                <path d="M93 17C93 9 100 3 108 3M97 17c0-6 5-10 11-10M101 17c0-4 3-6 7-6M105 17c0-2 1-3 3-3" fill="none" stroke="#222" stroke-width="1.300"/>
                <path d="M121 7h3l4-4v14l-4-4h-3zM131 7l7 7m0-7-7 7" fill="none" stroke="#111" stroke-width="1.300"/>
            </svg>
            <span class="ime">英</span>
            <div class="clock"><span>11:36</span><span>2021/10/13</span></div>
            <svg class="notify" width="24" height="26"><path d="M1 2h21v17h-7v5l-5-5H1z"/><path d="M4 7h15M4 11h15M4 15h10" stroke="#e8eef6" stroke-width="1.300"/></svg>
        </div>
        <div class="watermark">CSDN @星海映画</div>
    </div>

    <!-- floating library panel -->
    <div class="library">
        <div class="lib-head"><span>库...</span><i class="tri"></i><svg class="close"><use href="#i-x"/></svg></div>
        <div class="lib-body">
            <div class="lib-btns"><div class="button n1">Libraries...</div><div class="button n2">查找...</div><div class="button n3">Place</div></div>
            <div class="lib-combo"><svg class="lib"><use href="#i-schlib"/></svg><span>CoolBlocks.SchLib</span><svg class="chev"><use href="#i-chev"/></svg><svg class="more-glyph" width="10" height="6"><path d="M0 2c2-2 3-1 5 0 2-1 3-2 5 0L8 4H6L5 6 4 4H2z" fill="#111"/></svg></div>
            <div class="lib-combo filter"><span>*</span><svg class="chev last"><use href="#i-chev"/></svg></div>
            <div class="lib-list">
                <div class="list-main">
                    <div class="list-head">元件名称<svg width="9" height="8"><path d="M1 7.500 5 .5" stroke="#888"/><path d="m5 .5 3 7H1" fill="none" stroke="#fff"/></svg></div>
                    <div class="part hl"><svg><use href="#i-part"/></svg><span>8050</span></div>
                    <div class="part"><svg><use href="#i-part"/></svg><span>A</span></div>
                    <div class="part"><svg><use href="#i-part"/></svg><span class="wide">AMS1117-3.3</span></div>
                    <div class="part"><svg><use href="#i-part"/></svg><span>Bat</span></div>
                    <div class="part"><svg><use href="#i-part"/></svg><span>BLM</span></div>
                    <div class="part"><svg><use href="#i-part"/></svg><span class="wide">BQ2057CSN</span></div>
                    <div class="part"><svg><use href="#i-part"/></svg><span>C 0.01uF</span></div>
                </div>
                <div class="scroll"><svg><use href="#i-up"/></svg><i></i><svg class="down"><use href="#i-up"/></svg></div>
            </div>
            <div class="count">67 components</div>
            <div class="section"><div class="box symbol">
                <svg width="365" height="71"><path d="M166.500 15v18l9 6m0 0-9 7v17M175.500 32v12M175.500 38.500h17" fill="none" stroke="#000"/><path d="m165 47 2-5 4 2z" fill="#00f"/><path d="M161 38h1v1h-1z" fill="#00f"/><text x="185" y="36" class="sym">1</text><text x="195" y="27" class="sym blue">*</text><text x="196" y="39" class="sym blue">8050</text><text transform="translate(164 23) rotate(-90)" class="sym">3</text><text transform="translate(164 60) rotate(-90)" class="sym">2</text></svg>
            </div><svg class="fold-up"><use href="#i-up"/></svg></div>
            <div class="section"><div class="box">
                <div class="cols"><span class="c1">模型...</span><span class="c2">Model Ty...</span><span class="c3">模型...</span><span class="c3">模型...</span><span class="c3">模型...</span><span class="c3">模型...</span><span class="c3">模型...</span></div>
            </div><svg class="fold-up"><use href="#i-up"/></svg></div>
            <div class="section"><div class="box nopreview">No Preview Available</div><svg class="fold-up"><use href="#i-up"/></svg></div>
            <div class="section"><div class="box">
                <div class="cols tall"><span class="d1">供应商<svg width="9" height="8"><path d="M1 7.500 5 .5" stroke="#888"/><path d="m5 .5 3 7H1" fill="none" stroke="#fff"/></svg></span><span class="d1">制造商</span><span class="d1">描述</span><span class="d2">单价</span></div>
            </div><svg class="fold-up"><use href="#i-up"/></svg></div>
            <div class="section"><div class="box"></div><svg class="fold-up"><use href="#i-up"/></svg></div>
        </div>
    </div>
</body>
</html>
```

FILE: styles.css
```css
* {
    box-sizing: border-box;
}

body {
    margin: 0;
    width: 1920px;
    height: 1080px;
    overflow: hidden;
    position: relative;
    background: #a8a8a8;
    color: #000;
    font-family: "Open Sans", "Noto Sans CJK SC", sans-serif;
    font-size: 13px;
    white-space: nowrap;
}

.sprite {
    position: absolute;
}

i {
    font-style: normal;
}

svg {
    flex: none;
}

.icon {
    width: 16px;
    height: 16px;
}

.tri {
    flex: none;
    width: 0;
    height: 0;
    border: 4px solid transparent;
    border-top: 5px solid #000;
    border-bottom: 0;
}

.tri.small {
    border-width: 4px 3px 0;
}

.tri.grey {
    border-top-color: #999;
}

.grip {
    flex: none;
    width: 3px;
    height: 19px;
    background: repeating-linear-gradient(#9a9a9a 0 2px, #f0f0f0 2px 3px);
}

/* title bar */
.titlebar {
    height: 29px;
    display: flex;
    align-items: center;
    background: #fff;
    padding-left: 3px;
}

.app-icon {
    width: 18px;
    height: 18px;
}

.title-text {
    margin-left: 6px;
    font-size: 15.5px;
    letter-spacing: 0.1px;
}

.win-btns {
    margin-left: auto;
    margin-right: 20px;
}

/* menu bar */
.menubar,
.toolbar {
    display: flex;
    align-items: center;
    background: #f0f0f0;
    padding-left: 3px;
}

.menubar {
    height: 31px;
    font-size: 15px;
}

.menubar > * {
    position: relative;
    top: -1px;
}

.toolbar {
    height: 29px;
}

.dxp {
    margin-left: 5px;
    margin-right: 5px;
}

.menu {
    flex: none;
}

.m-dxp { width: 41px; }
.m1 { width: 64px; }
.m2 { width: 64px; }
.m3 { width: 66.5px; }
.m4 { width: 65px; }
.m5 { width: 97px; }
.m6 { width: 76px; }
.m7 { width: 66px; }

.drops {
    display: flex;
    margin-left: 2px;
}

.drops span {
    display: flex;
    align-items: center;
    width: 40px;
    gap: 8px;
}

.bar-right {
    margin-left: auto;
    display: flex;
    align-items: center;
    padding-right: 7px;
}

.combo {
    display: flex;
    height: 24px;
    background: #fff;
    font-size: 15.5px;
    line-height: 23px;
    margin-left: 3px;
}

.combo span {
    flex: 1;
    overflow: hidden;
    padding-left: 2px;
}

.combo b {
    flex: none;
    width: 15px;
    margin: 1px;
    background: #f0f0f0;
    display: flex;
    align-items: center;
    justify-content: center;
}

.address { width: 197px; margin-right: 3px; letter-spacing: 0.1px; }
.saved { width: 148px; }
.f1 { width: 87px; }
.f2 { width: 169px; }

.nav {
    width: 17px;
    height: 18px;
    margin-right: 4px;
}

.nav + .tri {
    margin-right: 4px;
}

.home {
    margin: 0 7px 0 2px;
}

.zf {
    margin: 0 8px 0 2px;
}

/* toolbar */
.tools {
    display: flex;
    align-items: center;
    height: 28px;
}

.tools svg {
    width: 16px;
    height: 16px;
    margin: 0 3.5px;
}

.sep {
    width: 1px;
    height: 26px;
    background: #9d9d9d;
    margin: 0 2px;
}

.tool-on {
    display: flex;
    align-items: center;
    width: 23px;
    height: 25px;
    margin-left: 2px;
    border: 1px solid #0078d7;
    background: #cde4f5;
}

.tools .tool-on svg {
    width: 18px;
    margin: 0 1px;
}

.combo.saved {
    margin-left: 1px;
}

.g2 {
    margin-left: 5px;
}

.letter-a {
    width: 24px;
    text-align: center;
    font: bold 18px "Liberation Serif", serif;
    color: #3d66b5;
}

.place + .grip {
    margin-left: 8px;
}

/* workspace */
.workspace {
    height: 906px;
    display: flex;
    padding: 3px;
    background: #a8a8a8;
}

.panel {
    width: 390px;
    background: #dedede;
    margin-right: 3px;
    display: flex;
    flex-direction: column;
}

.panel-head {
    height: 34px;
    display: flex;
    align-items: center;
    padding-left: 6px;
    background: linear-gradient(#b5d1e4, #a4c4da);
    font-size: 16.5px;
    font-weight: bold;
}

.head-icons {
    display: flex;
    align-items: center;
    gap: 15px;
    margin-left: auto;
    margin-right: 12px;
}

.pin {
    width: 9px;
    height: 11px;
}

.close {
    width: 8px;
    height: 8px;
}

.panel-body {
    flex: 1;
    display: flex;
    flex-direction: column;
    padding: 15px 15px 16px;
}

.form-row {
    display: flex;
    align-items: center;
    gap: 6px;
    height: 37px;
}

.form-row.second {
    margin-top: 10px;
    height: 36px;
}

.select {
    width: 253px;
    height: 100%;
    border: 1px solid #8a8a8a;
    background: #f4f4f4;
    padding-left: 5px;
    padding-bottom: 3px;
    display: flex;
    align-items: center;
    letter-spacing: 0.1px;
}

.select b {
    width: 19px;
    height: 23px;
    margin-left: auto;
    margin-right: 4px;
    border: 1px solid #fff;
    border-right-color: #888;
    border-bottom-color: #888;
    display: flex;
    align-items: center;
    justify-content: center;
}

.button {
    border: 1px solid #a9a9a9;
    background: #e1e1e1;
    display: flex;
    align-items: center;
    justify-content: center;
}

.form-row .button {
    width: 101px;
    height: 35px;
    padding-bottom: 2px;
    font-size: 14px;
}

.form-row.radios {
    gap: 0;
    margin-top: 11px;
    height: 35px;
}

.radio {
    width: 16px;
    height: 16px;
    border: 1px solid #333;
    border-radius: 50%;
    background: #fff;
}

.radio.on {
    background: radial-gradient(circle, #333 0 4.8px, #fff 5.5px);
}

.r-files {
    width: 66px;
    padding-left: 3px;
}

.r-struct {
    width: 161px;
    padding-left: 3px;
}

.button svg {
    width: 18px;
    height: 18px;
}

.form-row .sq {
    width: 39px;
    margin-right: 5px;
}

.form-row .split {
    width: 57px;
    gap: 5px;
}

.split .bar {
    width: 1px;
    height: 28px;
    margin-left: 5px;
    background: #999;
}

.split .tri {
    border-width: 4px 4px 0;
}

/* project tree */
.tree {
    flex: 1;
    margin: 17px 1px 0;
    background: #fff;
    border: 1px solid #8a8a8a;
    padding: 6px 6px 0 10px;
}

.node {
    display: flex;
    height: 22px;
    align-items: center;
}

.node.l1 { padding-left: 18px; }
.node.l2 { padding-left: 50px; }

.node svg {
    width: 16px;
    height: 13px;
    margin-top: -2px;
}

.node svg.prj,
.node svg.lib {
    height: 16px;
}

.node svg.fold {
    width: 15px;
    margin-right: 1px;
}

.exp {
    width: 9px;
    height: 9px;
    border: 1px solid #555;
    margin-right: 5px;
    background: linear-gradient(#000, #000) center / 5px 1px no-repeat;
}

.exp.plus {
    background: linear-gradient(#000, #000) center / 5px 1px no-repeat, linear-gradient(#000, #000) center / 1px 5px no-repeat;
}

.cell {
    flex: 1;
    height: 22px;
    line-height: 22px;
    padding-left: 3px;
    border-top: 1px solid #dcdcdc;
    border-right: 1px solid #dcdcdc;
    background:
        linear-gradient(#dcdcdc, #dcdcdc) right 50px top / 1px 100% no-repeat,
        linear-gradient(#dcdcdc, #dcdcdc) right 24px top / 1px 100% no-repeat;
}

.wide {
    letter-spacing: 0.42px;
}

.cell b {
    letter-spacing: 0.35px;
}

.cell b.cjk {
    font-size: 13.5px;
    letter-spacing: 0.55px;
}

.cell b.plain {
    letter-spacing: 0.1px;
}

.group .cell {
    background: #99b4d1;
    border-color: #99b4d1;
}

.selected .cell {
    background: #0078d7;
    border-color: #0078d7;
    color: #fff;
}

/* editor */
.editor {
    width: 1480px;
    display: flex;
    flex-direction: column;
}

.tabs {
    height: 38px;
    display: flex;
    border-bottom: 3px solid #dedede;
    font-size: 14.5px;
    color: #fff;
}

.tab {
    display: flex;
    align-items: center;
    flex: none;
    height: 35px;
    padding-left: 5px;
}

.tab svg {
    width: 16px;
    height: 13px;
    margin-right: 5px;
}

.tab svg.sq {
    height: 16px;
}

.tab .tri {
    margin-left: auto;
    margin-right: 3px;
    margin-top: -5px;
    border-top-color: #fff;
}

.t1 { width: 101px; letter-spacing: 0.1px; }
.t2 { width: 219px; letter-spacing: 0.7px; }
.t3 { width: 299px; letter-spacing: 0.24px; }
.t4 { width: 156px; letter-spacing: 0.28px; }
.t5 { width: 153px; letter-spacing: 0.1px; }
.t6 { width: 160px; letter-spacing: 0.15px; }

.tab.t1 { padding-left: 4px; }

.tab.active {
    background: #dedede;
    color: #000;
}

.tab.active .tri {
    border-top-color: #000;
}

.board {
    display: block;
}

.layerbar {
    flex: 1;
    display: flex;
    align-items: flex-start;
    background: #f0f0f0;
    border-top: 1px solid #d0d0d0;
    font-size: 14.5px;
}

.ls {
    display: flex;
    width: 68px;
    height: 21px;
    margin: 3px 16px 0 4px;
    border: 1px solid #777;
    color: #777;
}

.ls i {
    width: 38px;
    background: #f0f;
    border-right: 1px solid #777;
}

.ls span {
    padding-left: 6px;
    line-height: 23px;
    font-size: 14.5px;
}

.arrow {
    border: 4px solid transparent;
    margin-top: 9px;
}

.arrow.left {
    border-right-color: #999;
    border-left: 0;
    margin-left: -1px;
}

.arrow.right {
    border-left-color: #000;
    border-right: 0;
    margin-left: 22px;
}

.layers {
    display: flex;
    width: 1105px;
    margin-left: 14px;
    overflow: hidden;
}

.layer {
    flex: none;
    display: flex;
    align-items: center;
    height: 26px;
    background: #fff;
    border: 1px solid #c4c4c4;
    border-width: 0 1px 1px 0;
    border-radius: 0 0 3px 3px;
    padding-left: 6px;
    padding-bottom: 1px;
}

.layer i {
    flex: none;
    width: 15px;
    height: 15px;
    margin-right: 5px;
    border: 1px solid #888;
}

.layer.current {
    background: #dedede;
    font-weight: bold;
    letter-spacing: 0.3px;
}

.w1 { width: 99px; }
.w2 { width: 123px; }
.w3 { width: 130px; }
.w4 { width: 114px; }
.w5 { width: 139px; }
.w6 { width: 97px; }
.w7 { width: 122px; }
.w8 { width: 105px; }
.w9 { width: 130px; }
.w10 { width: 110px; }

.red { background: #f00; }
.blue { background: #00f; }
.magenta { background: #f0f; }
.yellow { background: #ff0; }
.olive { background: #808000; }
.gray { background: #808080; }
.maroon { background: #800000; }
.purple { background: #800080; }

.lbtn {
    display: flex;
    align-items: center;
    justify-content: center;
    height: 28px;
    border: 1px solid #d9d9d0;
    border-left-color: #fff;
    padding-bottom: 2px;
    color: #666;
    font-size: 17px;
}

.b0 { width: 49px; }
.b1 { width: 49px; }
.b2 { width: 95px; }
.b3 { width: 52px; }

.lbtn svg {
    width: 26px;
    height: 16px;
}

.sidestrip {
    width: 38px;
    margin-left: 3px;
    background: #f0f0f0;
    padding: 1px 4px 1px 3px;
}

.sidetab {
    width: 30px;
    height: 62px;
    border: 1px solid #ddd;
    background: #fafafa;
    writing-mode: vertical-rl;
    line-height: 31px;
    padding-top: 4px;
    font-size: 14px;
    color: #444;
}

/* status bar */
.statusbar {
    height: 35px;
    display: flex;
    align-items: center;
    background: #f0f0f0;
    border-top: 1px solid #666;
    padding-left: 7px;
    padding-bottom: 1px;
}

.s1 { width: 106px; letter-spacing: 0.1px; }
.s2 { width: 120px; letter-spacing: 0.1px; }
.s3 { width: 254px; letter-spacing: 0.1px; }

.s4,
.s5 {
    height: 28px;
    line-height: 26px;
    border-left: 1px solid #999;
    padding-left: 8px;
}

.s4 { width: 489px; }

.s5 {
    width: 429px;
    overflow: hidden;
    letter-spacing: 0.1px;
}

.sysbtns {
    display: flex;
    height: 26px;
    border: 1px solid #d0d0d0;
    background: #fafafa;
    color: #666;
}

.sysbtns span {
    text-align: center;
    line-height: 23px;
    border-right: 1px solid #d0d0d0;
}

.y1 { width: 61px; }
.y2 { width: 118px; }
.y3 { width: 91px; }
.y4 { width: 104px; letter-spacing: 0.1px; }
.y5 { width: 42px; }
.y6 { width: 63px; font-size: 13.5px; }

.more {
    width: 26px;
    height: 26px;
    margin-left: 4px;
    line-height: 23px;
    text-align: center;
    border: 1px solid #d0d0d0;
    background: #fafafa;
    color: #666;
}

/* taskbar */
.taskbar {
    position: relative;
    height: 50px;
    display: flex;
    background: linear-gradient(90deg, #cfe6ee, #cfe4ee 45%, #d4dfec 65%, #d4dcea);
}

.start {
    width: 60px;
    display: flex;
    align-items: center;
    justify-content: center;
}

.search {
    width: 430px;
    display: flex;
    align-items: center;
    background: #fff;
    border: 1px solid #c8c8c8;
    padding-left: 13px;
    font-size: 19px;
    color: #222;
}

.search span {
    margin-left: 14px;
    margin-top: -2px;
}

.apps {
    display: flex;
}

.app {
    width: 51px;
    margin-right: 11px;
    display: flex;
    align-items: center;
    justify-content: center;
}

.app.a0 {
    width: 60px;
    margin-right: 0;
}

.app.a0:nth-child(2) {
    margin-right: 9px;
}

.app.run {
    border-bottom: 3px solid #0078d7;
    padding-top: 3px;
}

.app.cur {
    width: 61px;
    margin-left: -5px;
    margin-right: 6px;
    background: #ecf4f8;
}

.mini {
    font: bold 10px "Open Sans", sans-serif;
    fill: #a38f5c;
}

.tray {
    margin-left: auto;
    display: flex;
    align-items: center;
    padding-right: 29px;
}

.temp {
    width: 148px;
    margin-left: 12px;
    margin-top: -2px;
    font-size: 18px;
}

.ime {
    width: 18px;
    font-size: 17px;
    font-weight: 500;
    margin-left: -76px;
    margin-right: 6px;
}

.clock {
    width: 92px;
    display: flex;
    flex-direction: column;
    align-items: center;
    font-size: 15px;
    line-height: 23px;
}

.notify {
    margin-left: 14px;
}

.watermark {
    position: absolute;
    left: 1754px;
    top: 17px;
    font-size: 19.5px;
    color: rgba(255, 255, 255, 0.75);
    text-shadow: 0 0 2px #555, 1px 1px 1px #666;
}

/* floating library panel, slightly see-through */
.library {
    position: absolute;
    left: 1523px;
    top: 110px;
    width: 394px;
    height: 789px;
    border: 1px solid #222;
    background: #dedede;
    opacity: 0.9;
    box-shadow: 1px 1px 4px rgba(0, 0, 0, 0.5);
}

.lib-head {
    height: 37px;
    border-top: 3px solid #fff;
    background: linear-gradient(#b5d4ea, #a4c8e0);
    display: flex;
    align-items: center;
    padding-left: 6px;
    padding-right: 11px;
    font-size: 19px;
}

.lib-head span {
    flex: 1;
    font-weight: 600;
}

.lib-head .tri {
    margin-right: 15px;
}

.lib-body {
    padding: 13px 2px 0 12px;
}

.lib-btns {
    display: flex;
    height: 35px;
    padding-left: 1px;
}

.n1 { width: 94px; margin-right: 11px; }
.n2 { width: 95px; margin-right: 10px; }
.n3 { width: 147px; background: #cacaca; border-color: #bbb; color: #a0a0a0; text-shadow: 1px 1px #f0f0f0; }

.lib-combo {
    width: 367px;
    height: 27px;
    margin-top: 11px;
    background: #fff;
    border: 1px solid #666;
    border-right: 0;
    display: flex;
    align-items: center;
    padding-left: 4px;
}

.lib-combo.filter {
    margin-top: 14px;
    padding-left: 3px;
}

.lib-combo span {
    flex: 1;
}

.lib-combo.filter span {
    font-size: 11px;
    margin-top: -2px;
}

.lib-combo .lib {
    width: 16px;
    height: 16px;
    margin-right: 4px;
}

.chev {
    width: 10px;
    height: 6px;
    margin-right: 15px;
}

.chev.last {
    margin-right: 7px;
}

.more-glyph {
    margin-right: 6px;
}

.lib-list {
    width: 367px;
    height: 172px;
    margin-top: 14px;
    display: flex;
    border: 1px solid #888;
    border-right: 0;
    background: #fff;
    overflow: hidden;
}

.list-main {
    width: 345px;
}

.list-head {
    height: 24px;
    background: #f0f0f0;
    border-right: 1px solid #999;
    border-bottom: 1px solid #999;
    padding: 0 7px 1px 3px;
    line-height: 21px;
    font-size: 14px;
    display: flex;
    align-items: center;
    justify-content: space-between;
}

.part {
    display: flex;
    align-items: center;
    height: 22px;
    margin-left: 10px;
    border-left: 1px dotted #444;
}

.part::before {
    content: "";
    width: 13px;
    border-top: 1px dotted #444;
}

.part svg {
    width: 14px;
    height: 14px;
}

.part span {
    flex: 1;
    line-height: 22px;
    margin-left: 1px;
    padding-left: 2px;
}

.part.hl {
    border-left-color: transparent;
}

.part.hl span {
    background: #f0f0f0;
    letter-spacing: 0.3px;
}

.scroll {
    flex: 1;
    background: #f0f0f0;
    display: flex;
    flex-direction: column;
    align-items: center;
    padding: 7px 1px;
}

.scroll svg {
    width: 10px;
    height: 6px;
}

.scroll i {
    width: 19px;
    height: 21px;
    margin-top: 8px;
    background: #cdcdcd;
}

.scroll .down {
    margin-top: auto;
    transform: rotate(180deg);
}

.count {
    height: 32px;
    padding: 1px 0 0 6px;
    letter-spacing: 0.1px;
}

.section {
    display: flex;
    justify-content: space-between;
    height: 73px;
    margin-bottom: 7px;
}

.box {
    width: 367px;
    height: 73px;
    border: 1px solid #8c8c8c;
    background: #fff;
}

.fold-up {
    width: 8px;
    height: 5px;
    margin-top: 2px;
    margin-right: 1px;
}

.symbol {
    background: #ffffe6;
}

.sym {
    font: 11px "Liberation Serif", serif;
}

.blue.sym {
    fill: #2a2a8c;
}

.nopreview {
    display: flex;
    align-items: center;
    justify-content: center;
}

.cols {
    display: flex;
    height: 24px;
    background: #f0f0f0;
    border-bottom: 1px solid #999;
    padding-top: 2px;
    line-height: 20px;
}

.cols span {
    border-right: 1px solid #999;
    padding-left: 3px;
    overflow: hidden;
    height: 20px;
}

.c1 { width: 49px; }
.c2 { width: 71px; letter-spacing: 0.1px; }
.c3 { width: 49px; }

.cols.tall {
    height: 43px;
    font-size: 14px;
    line-height: 19px;
}

.cols.tall span {
    height: 39px;
    position: relative;
}

.cols.tall svg {
    position: absolute;
    right: 6px;
    bottom: 16px;
}

.d1 { width: 107px; }

.cols .d2 {
    width: 44px;
    text-align: right;
    padding-right: 2px;
}
```
